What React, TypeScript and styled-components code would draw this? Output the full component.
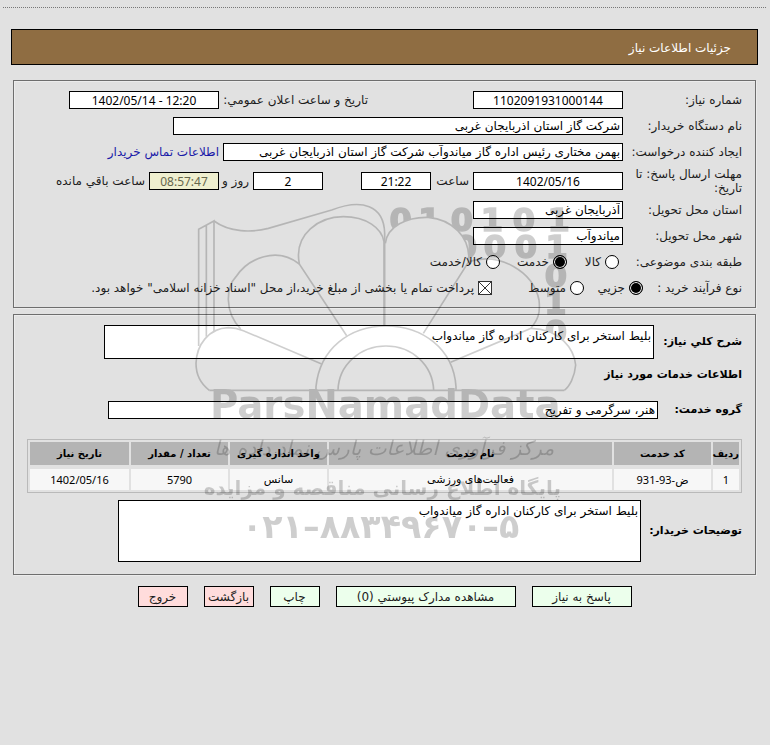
import React from "react";
import styled, { createGlobalStyle, css } from "styled-components";

const textFont = '"DejaVu Sans", Tahoma, sans-serif';
const numberFont = '"Noto Sans", "DejaVu Sans", sans-serif';

const GlobalStyle = createGlobalStyle`
  *, *::before, *::after { box-sizing: border-box; }
  body {
    margin: 0;
    background: #e1e1e1;
    color: #1c1c1c;
    font: 12px/14px ${textFont};
  }
  input, textarea, button { font: inherit; color: inherit; margin: 0; }
`;

const Page = styled.main`
  position: relative;
  direction: rtl;
  min-height: 100vh;
  padding: 7px 14px 24px 13px;
`;

const DottedRule = styled.hr`
  margin: 0 -10px 21px;
  border: 0;
  border-top: 1px dotted #777;
`;

const TitleBar = styled.h1`
  display: flex;
  align-items: center;
  height: 36px;
  margin: 0 -2px 15px;
  padding: 2px 26px 0;
  border: 1px solid #000;
  background: #8f6d42;
  color: #fff;
  font-size: 12px;
  font-weight: 400;
`;

const Panel = styled.fieldset<{ $roomy?: boolean }>`
  min-width: 0;
  margin: 0 0 6px;
  padding: ${(p) => (p.$roomy ? "10px 13px 12px" : "6px 13px")};
  border: 1px solid #6e6e6e;
  box-shadow: inset 1px 1px #ececec, 1px 1px #ececec;
`;

const Row = styled.div<{ $tall?: boolean }>`
  display: flex;
  align-items: center;
  min-height: ${(p) => (p.$tall ? 32 : 26)}px;
`;

const Label = styled.label<{ $width?: number; $bold?: boolean }>`
  flex: none;
  ${(p) => p.$width && css`width: ${p.$width}px;`}
  ${(p) => p.$bold && css`
    font-size: 11px;
    font-weight: 700;
    color: #000;
  `}
`;

const GroupLabel = styled(Label).attrs({ as: "span" })``;

const Caption = styled.span<{ $width?: number }>`
  flex: none;
  padding-right: 4px;
  ${(p) => p.$width && css`width: ${p.$width}px;`}
`;

const boxed = css`
  border: 1px solid #000;
  border-radius: 0;
  background: #fff;
  color: #000;
  outline: none;
`;

const Field = styled.input<{ $width: number; $numeric?: boolean; $timer?: boolean }>`
  ${boxed}
  flex: 0 1 ${(p) => p.$width}px;
  width: ${(p) => p.$width}px;
  min-width: 0;
  height: 18px;
  padding: 0 2px;
  ${(p) => p.$numeric && css`
    direction: ltr;
    text-align: center;
    font-family: ${numberFont};
  `}
  ${(p) => p.$timer && css`
    background: #efefcf;
    color: #66664c;
  `}
`;

const Memo = styled.textarea<{ $width: number; $height: number }>`
  ${boxed}
  flex: 0 1 ${(p) => p.$width}px;
  display: block;
  height: ${(p) => p.$height}px;
  padding: 3px 2px;
  resize: none;
  overflow: hidden;
`;

const Spacer = styled.span<{ $width: number }>`
  flex: 0 1 ${(p) => p.$width}px;
`;

const ContactLink = styled.a`
  margin-right: 4px;
  color: #1a1aa8;
  text-decoration: none;
`;

const Option = styled.label<{ $width?: number }>`
  display: flex;
  align-items: center;
  gap: 4px;
  flex: none;
  ${(p) => p.$width && css`width: ${p.$width}px;`}
`;

const Radio = styled.input.attrs({ type: "radio" })`
  appearance: none;
  width: 14px;
  height: 14px;
  border: 1px solid #000;
  border-radius: 50%;
  background: #fff;
  &:checked {
    background: #000;
    box-shadow: inset 0 0 0 1px #fff;
  }
`;

const Tick = styled.input.attrs({ type: "checkbox" })`
  appearance: none;
  width: 14px;
  height: 14px;
  border: 1px solid #333;
  background: #fff;
  &:checked {
    background:
      linear-gradient(45deg, transparent 47%, #333 48%, #333 52%, transparent 53%),
      linear-gradient(-45deg, transparent 47%, #333 48%, #333 52%, transparent 53%),
      #fff;
  }
`;

const SectionTitle = styled.h2`
  display: flex;
  align-items: center;
  height: 32px;
  margin: 0;
  font-size: 11px;
  font-weight: 700;
  color: #000;
`;

const GroupRow = styled(Row)`
  min-height: 38px;
`;

const ServiceTable = styled.table`
  width: 100%;
  margin: 10px 0 7px;
  table-layout: fixed;
  border: 1px solid #b9b9b9;
  border-spacing: 2px;
  color: #000;
  font-size: 11px;
`;

const HeadCell = styled.th<{ $width?: number }>`
  ${(p) => p.$width && css`width: ${p.$width}px;`}
  height: 23px;
  padding: 0;
  background: #b4b4b4;
  font-size: 10px;
  font-weight: 700;
  white-space: nowrap;
`;

const Cell = styled.td<{ $numeric?: boolean }>`
  height: 23px;
  padding: 0;
  border-top: 2px solid #e1e1e1;
  background: #f7f7f7;
  text-align: center;
  ${(p) => p.$numeric && css`font-family: ${numberFont};`}
`;

const Actions = styled.div`
  display: flex;
  justify-content: center;
  flex-wrap: wrap;
  gap: 16px;
  margin-top: 11px;
`;

const ActionButton = styled.button<{ $width: number; $leave?: boolean }>`
  width: ${(p) => p.$width}px;
  height: 21px;
  padding: 0;
  border: 1px solid #000;
  background: ${(p) => (p.$leave ? "#ffdcdc" : "#ecffec")};
  color: #1c1c1c;
  white-space: nowrap;
`;

const WatermarkArt = styled.svg`
  position: absolute;
  top: 190px;
  left: 0;
  right: 0;
  width: 420px;
  height: 360px;
  margin: 0 auto;
  pointer-events: none;
  opacity: 0.19;
`;

const Wordmark = styled.text<{ $size: number; $bold?: boolean; $slanted?: boolean }>`
  font-family: ${textFont};
  font-size: ${(p) => p.$size}px;
  font-weight: ${(p) => (p.$bold ? 700 : 400)};
  font-style: ${(p) => (p.$slanted ? "italic" : "normal")};
  text-anchor: middle;
`;

const BinaryDigit = styled(Wordmark)`
  stroke: #000;
  stroke-width: 5px;
`;

const binaryDigits = [
  ["0", 662, 122], ["1", 748, 122], ["0", 846, 122], ["1", 936, 122], ["0", 1032, 122], ["1", 1136, 122],
  ["0", 858, 205], ["0", 945, 205], ["0", 1038, 205], ["1", 1130, 205],
  ["0", 1128, 290], ["1", 1126, 372], ["0", 1128, 458],
] as const;

const petals = [
  "M88 601C60 580 48 550 48 520C50 465 85 415 145 413Q168 413 190 422L425 522",
  "M182 417C130 362 140 290 168 260C205 205 290 168 358 222L500 437",
  "M358 222C340 130 420 80 490 80C560 80 605 115 612 155V405",
  "M616 160C622 110 680 80 745 82C815 88 872 140 866 215L730 430",
  "M866 215C960 185 1060 245 1077 330C1082 372 1072 390 1053 415L812 517",
  "M1053 415C1140 418 1182 475 1187 525C1184 562 1168 590 1153 601",
];

function Watermark() {
  return (
    <WatermarkArt viewBox="-15 0 1260 1080" aria-hidden="true" direction="ltr">
      <defs>
        <mask id="behindPetals" maskUnits="userSpaceOnUse" x="0" y="0" width="1260" height="1080">
          <rect width="1260" height="1080" fill="#fff" />
          <path
            fill="#000"
            d="M616 405V160C622 110 680 80 745 82C815 88 872 140 866 215C960 185 1060 245 1077 330C1082 372 1072 390 1053 415C1140 418 1182 475 1187 525V601H616Z"
          />
        </mask>
      </defs>
      <g mask="url(#behindPetals)">
        {binaryDigits.map(([digit, x, y]) => (
          <BinaryDigit key={`${x}-${y}`} x={x} y={y} $size={96} $bold>{digit}</BinaryDigit>
        ))}
      </g>
      <g fill="none" stroke="#000" strokeWidth="5">
        {petals.map((d) => <path key={d} d={d} />)}
        <path d="M88 601H1153" />
        <path d="M408 601V590C420 475 510 408 618 408S820 475 828 590V601" />
        <path d="M474 601C476 525 540 468 618 468S758 525 761 601" />
        <path d="M56 468V118L102 93V423M79 106V440" />
        <path d="M102 93C150 128 215 128 265 115L455 60C545 25 612 45 614 130V405" />
      </g>
      <Wordmark x={616} y={684} $size={116} $bold>ParsNamadData</Wordmark>
      <Wordmark x={612} y={796} $size={60} $slanted>مرکز فرآوری اطلاعات پارس نماد داده ها</Wordmark>
      <Wordmark x={607} y={914} $size={60} $bold>پایگاه اطلاع رسانی مناقصه و مزایده</Wordmark>
      <Wordmark x={602} y={1045} $size={100} $bold>۰۲۱–۸۸۳۴۹۶۷۰–۵</Wordmark>
    </WatermarkArt>
  );
}

const columns: { title: string; width?: number }[] = [
  { title: "ردیف", width: 26 },
  { title: "کد خدمت", width: 97 },
  { title: "نام خدمت" },
  { title: "واحد اندازه گیری", width: 97 },
  { title: "تعداد / مقدار", width: 97 },
  { title: "تاریخ نیاز", width: 99 },
];

export default function App() {
  return (
    <>
      <GlobalStyle />
      <Page>
        <DottedRule />
        <TitleBar>جزئیات اطلاعات نیاز</TitleBar>

        <Panel>
          <Row>
            <Label htmlFor="number" $width={119}>شماره نیاز:</Label>
            <Field id="number" $width={150} $numeric readOnly value="1102091931000144" />
            <Spacer $width={105} />
            <Label htmlFor="announced" $width={149}>تاریخ و ساعت اعلان عمومي:</Label>
            <Field id="announced" $width={150} $numeric readOnly value="1402/05/14 - 12:20" />
          </Row>
          <Row>
            <Label htmlFor="buyer" $width={119}>نام دستگاه خریدار:</Label>
            <Field id="buyer" $width={450} readOnly value="شرکت گاز استان اذربایجان غربی" />
          </Row>
          <Row>
            <Label htmlFor="author" $width={119}>ایجاد کننده درخواست:</Label>
            <Field
              id="author"
              $width={400}
              readOnly
              value="بهمن مختاری رئیس اداره گاز میاندوآب شرکت گاز استان اذربایجان غربی"
            />
            <ContactLink href="#contact">اطلاعات تماس خریدار</ContactLink>
          </Row>
          <Row $tall>
            <Label htmlFor="deadline" $width={119}>مهلت ارسال پاسخ: تا<br />تاریخ:</Label>
            <Field id="deadline" $width={150} $numeric readOnly value="1402/05/16" />
            <Caption $width={42}>ساعت</Caption>
            <Field aria-label="ساعت" $width={70} $numeric readOnly value="21:22" />
            <Spacer $width={38} />
            <Field aria-label="روز" $width={70} $numeric readOnly value="2" />
            <Caption $width={34}>روز و</Caption>
            <Field id="left" $width={70} $numeric $timer readOnly value="08:57:47" />
            <Caption as="label" htmlFor="left">ساعت باقي مانده</Caption>
          </Row>
          <Row>
            <Label htmlFor="province" $width={119}>استان محل تحویل:</Label>
            <Field id="province" $width={150} readOnly value="آذربایجان غربی" />
          </Row>
          <Row>
            <Label htmlFor="city" $width={119}>شهر محل تحویل:</Label>
            <Field id="city" $width={150} readOnly value="میاندوآب" />
          </Row>
          <Row role="radiogroup" aria-label="طبقه بندی موضوعی">
            <GroupLabel $width={123}>طبقه بندی موضوعی:</GroupLabel>
            <Option $width={52}><Radio name="subject" />کالا</Option>
            <Option $width={67}><Radio name="subject" defaultChecked />خدمت</Option>
            <Option><Radio name="subject" />کالا/خدمت</Option>
          </Row>
          <Row role="radiogroup" aria-label="نوع فرآیند خرید">
            <GroupLabel $width={99}>نوع فرآیند خرید :</GroupLabel>
            <Option $width={59}><Radio name="process" defaultChecked />جزیي</Option>
            <Option $width={92}><Radio name="process" />متوسط</Option>
            <Option>
              <Tick defaultChecked />
              پرداخت تمام یا بخشی از مبلغ خرید،از محل "اسناد خزانه اسلامی" خواهد بود.
            </Option>
          </Row>
        </Panel>

        <Panel $roomy>
          <Row>
            <Label htmlFor="summary" $bold $width={88}>شرح كلي نیاز:</Label>
            <Memo id="summary" $width={550} $height={34} readOnly value="بلیط استخر برای کارکنان اداره گاز میاندواب" />
          </Row>
          <SectionTitle>اطلاعات خدمات مورد نیاز</SectionTitle>
          <GroupRow>
            <Label htmlFor="group" $bold $width={84}>گروه خدمت:</Label>
            <Field id="group" $width={550} readOnly value="هنر، سرگرمی و تفریح" />
          </GroupRow>
          <ServiceTable>
            <thead>
              <tr>
                {columns.map((c) => (
                  <HeadCell key={c.title} scope="col" $width={c.width}>{c.title}</HeadCell>
                ))}
              </tr>
            </thead>
            <tbody>
              <tr>
                <Cell $numeric>1</Cell>
                <Cell $numeric>ض-93-931</Cell>
                <Cell>فعالیت‌های ورزشی</Cell>
                <Cell>سانس</Cell>
                <Cell $numeric>5790</Cell>
                <Cell $numeric>1402/05/16</Cell>
              </tr>
            </tbody>
          </ServiceTable>
          <Row>
            <Label htmlFor="notes" $bold $width={101}>توضیحات خریدار:</Label>
            <Memo id="notes" $width={523} $height={62} readOnly value="بلیط استخر برای کارکنان اداره گاز میاندواب" />
          </Row>
        </Panel>

        <Actions>
          <ActionButton type="button" $width={100}>پاسخ به نیاز</ActionButton>
          <ActionButton type="button" $width={180}>مشاهده مدارک پیوستي (0)</ActionButton>
          <ActionButton type="button" $width={50}>چاپ</ActionButton>
          <ActionButton type="button" $width={50} $leave>بازگشت</ActionButton>
          <ActionButton type="button" $width={50} $leave>خروج</ActionButton>
        </Actions>
        <Watermark />
      </Page>
    </>
  );
}
